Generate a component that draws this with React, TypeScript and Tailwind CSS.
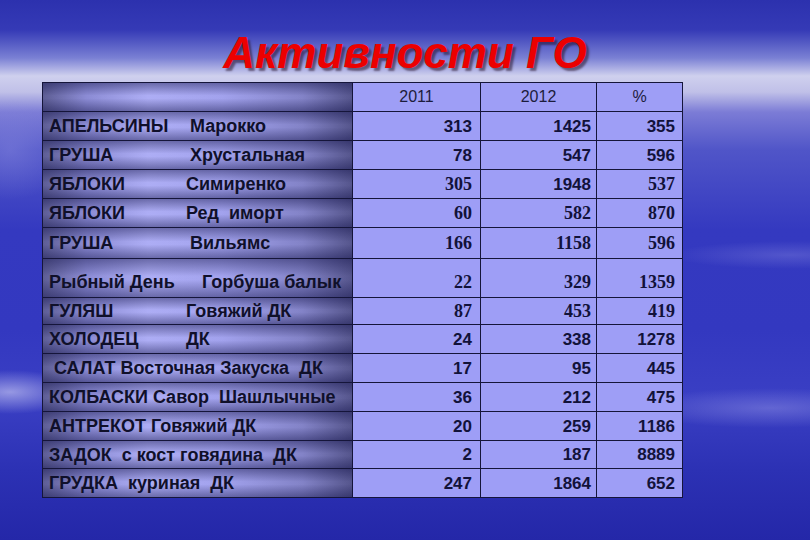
import React from 'react'

type Row = {
  a: string
  b?: string
  w?: number
  v: [string, string, string]
  serif: [boolean, boolean, boolean]
  low?: boolean
}

const rows: Row[] = [
  { a: 'АПЕЛЬСИНЫ', b: 'Марокко', w: 141, v: ['313', '1425', '355'], serif: [false, false, false] },
  { a: 'ГРУША', b: 'Хрустальная', w: 141, v: ['78', '547', '596'], serif: [false, false, false] },
  { a: 'ЯБЛОКИ', b: 'Симиренко', w: 137, v: ['305', '1948', '537'], serif: [true, false, true] },
  { a: 'ЯБЛОКИ', b: 'Ред  иморт', w: 137, v: ['60', '582', '870'], serif: [true, true, true] },
  { a: 'ГРУША', b: 'Вильямс', w: 141, v: ['166', '1158', '596'], serif: [true, true, true] },
  { a: 'Рыбный День', b: 'Горбуша балык', w: 153, v: ['22', '329', '1359'], serif: [true, true, true], low: true },
  { a: 'ГУЛЯШ', b: 'Говяжий ДК', w: 137, v: ['87', '453', '419'], serif: [true, true, true] },
  { a: 'ХОЛОДЕЦ', b: 'ДК', w: 137, v: ['24', '338', '1278'], serif: [false, false, false] },
  { a: ' САЛАТ Восточная Закуска  ДК', v: ['17', '95', '445'], serif: [false, false, false] },
  { a: 'КОЛБАСКИ Савор  Шашлычные', v: ['36', '212', '475'], serif: [false, false, false] },
  { a: 'АНТРЕКОТ Говяжий ДК', v: ['20', '259', '1186'], serif: [false, false, false] },
  { a: 'ЗАДОК  с кост говядина  ДК', v: ['2', '187', '8889'], serif: [false, false, false] },
  { a: 'ГРУДКА  куриная  ДК', v: ['247', '1864', '652'], serif: [false, false, false] },
]

const nameCell =
  'bg-[linear-gradient(to_bottom,rgba(30,30,80,0.45),rgba(255,255,255,0.05)_45%,rgba(255,255,255,0.05)_55%,rgba(30,30,80,0.45)),linear-gradient(to_right,#55558f_0%,#8585d2_14%,#a9a9f4_34%,#9d9dec_58%,#7c7cc4_84%,#4c4c86_100%)]'

const numPad = ['pr-[8px]', 'pr-[5px]', 'pr-[7px]']

export default function App() {
  return (
    <div className="relative w-[810px] h-[540px] overflow-hidden bg-[radial-gradient(ellipse_70px_22px_at_10px_392px,rgba(190,190,240,0.7),transparent),radial-gradient(ellipse_140px_20px_at_770px_408px,rgba(150,150,230,0.45),transparent),radial-gradient(ellipse_120px_14px_at_790px_255px,rgba(140,140,225,0.35),transparent),radial-gradient(ellipse_60px_50px_at_10px_150px,rgba(140,140,225,0.45),transparent),linear-gradient(to_bottom,#2c31ae_0px,#353ab6_30px,#7a80d4_58px,#cfd0ee_76px,#c0c0e8_92px,#7c7cd6_112px,#5055c8_150px,#3439c0_230px,#3338c0_330px,#3a3fc4_400px,#2c31b4_470px,#2427a8_540px)]">
      <h1 className="pt-[31px] h-[76px] text-center text-[44px] leading-[44px] font-bold italic text-[#ec0000] [font-family:'Liberation_Sans',Arial,sans-serif] [text-shadow:3px_3px_2px_rgba(40,20,40,0.55)]">
        Активности ГО
      </h1>
      <div className="ml-[42px] mt-[6px] w-[641px] p-px gap-px bg-[#15153a] grid grid-cols-[309px_127px_115px_85px] grid-rows-[28px_28px_28px_28px_28px_30px_38px_26px_28px_28px_28px_28px_27px_28px] [font-family:'Liberation_Sans',Arial,sans-serif]">
        <div className={nameCell} />
        {['2011', '2012', '%'].map((h) => (
          <div key={h} className="bg-[#9e9ef6] flex items-center justify-center text-[16px] text-[#1c1c3c]">
            {h}
          </div>
        ))}
        {rows.map((r, i) => (
          <React.Fragment key={i}>
            <div
              className={`${nameCell} flex ${r.low ? 'items-end pb-[6px]' : 'items-center'} pl-[6px] text-[18px] font-bold text-[#10102a] whitespace-pre leading-none`}
            >
              {r.b ? (
                <>
                  <span className="inline-block" style={{ width: r.w }}>
                    {r.a}
                  </span>
                  <span>{r.b}</span>
                </>
              ) : (
                <span>{r.a}</span>
              )}
            </div>
            {r.v.map((n, j) => (
              <div
                key={j}
                className={`bg-[#9e9ef6] flex justify-end ${r.low ? 'items-end pb-[6px]' : 'items-center'} ${numPad[j]} font-bold text-[#12123a] leading-none ${
                  r.serif[j] ? "text-[18px] [font-family:'Liberation_Serif','Times_New_Roman',serif]" : 'text-[17px]'
                }`}
              >
                {n}
              </div>
            ))}
          </React.Fragment>
        ))}
      </div>
    </div>
  )
}
